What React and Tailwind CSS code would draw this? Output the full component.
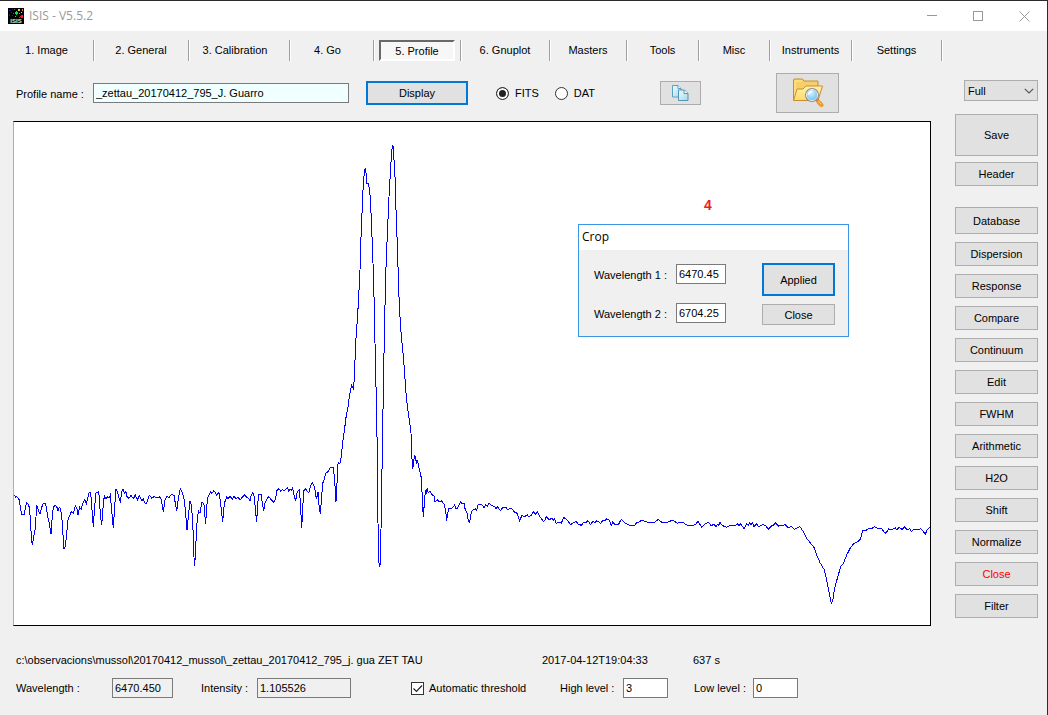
import React from "react";

// Spectrum samples. Each run lists x,y pairs relative to its own origin.
const RUNS = [
  {
    x: 0,
    y: 1410,
    points:
      "40,75 44,76 47,82 51,80 54,85 57,88 60,105 63,122 66,134 73,134 76,112 80,98 84,102 88,112 91,145 94,200 97,226 100,206 105,180 108,140 110,105 114,118 120,133 124,115 130,100 137,102 141,125 145,150 148,160 153,192 156,150 160,112 166,106 171,112 174,122 178,112 181,116 185,135 188,180 192,237 196,230 200,190 204,150 209,137 214,125 220,130 226,107 231,118 234,135 239,112 244,118 248,100 254,88 259,100 264,82 268,66 272,68 276,120 280,170 284,110 288,68 295,66 298,80 301,135 305,166 309,115 313,76 318,86 323,80 327,84 331,75 335,120 340,175 344,110 348,57 353,66 357,85 361,95 365,66 369,58 373,70 378,65 381,80 387,85 393,76 400,86 406,75 412,90 418,78 425,92 430,87 435,100 440,100 444,88 448,76 455,84 462,80 470,84 478,80 484,88 490,127 495,90 500,80 508,82 514,73 522,76 526,100 530,124 535,85 541,55 548,70 553,90 557,130 561,181 565,140 570,92 575,110 579,180 583,289 586,260 590,170 595,122 600,130 606,95 612,105 617,163 620,110 624,80 632,66 636,70 642,62 650,75 657,68 662,100 668,157 673,100 680,82 684,86 690,80 697,87 702,80 708,86 714,82 720,88",
  },
  {
    x: 690,
    y: 1320,
    points:
      "32,178 36,172 44,164 50,172 56,175 60,182 64,165 68,157 73,170 76,205 80,247 83,190 87,162 93,163 97,190 101,214 105,190 109,180 116,170 123,178 130,187 137,178 140,152 146,146 152,153 157,149 162,153 172,143 176,153 180,148 184,151 188,144 193,170 197,181 202,155 208,150 211,185 215,265 218,210 221,152 227,146 232,155 237,157 241,140 247,128 252,138 256,155 259,178 264,157 267,195 271,223 275,170 278,130 284,115 287,99 292,98 300,84 310,83 314,120 318,185 321,130 324,72",
  },
  {
    x: 960,
    y: 390,
    points:
      "56,998 60,1000 62,995 65,965 69,930 74,895 79,855 83,838 88,800 91,785 95,762 97,772 101,778 104,715 107,640 110,595 113,555 116,500 120,420 122,345 125,275 129,180 131,155 133,125 136,115 139,135 141,160 145,160 149,180 152,225 155,290 159,400 162,500 165,640 168,770 171,920 173,1010",
  },
  {
    x: 690,
    y: 1320,
    points: "442,130 444,250 446,360 448,380 450,375 453,270 455,120 457,60",
  },
  {
    x: 960,
    y: 390,
    points:
      "187,960 188,900 191,720 194,570 197,440 200,360 203,290 207,200 211,130 214,80 217,47 220,48 222,90 225,140 228,240 231,320 234,410 237,500 240,560 244,620 250,680 254,730 257,780 262,830 268,870 273,910 275,960 277,1015 280,1010 283,976 287,980 289,1002 293,992 297,1015 301,1028 304,1045",
  },
  {
    x: 690,
    y: 1320,
    points:
      "575,130 577,180 580,230 583,190 586,152 589,158 592,143 594,157 600,154 604,162 612,168 614,185 622,180 628,186 634,182 642,192 647,210 650,242 654,215 657,204 666,204 674,195 677,204 682,204 691,186 697,192 702,190 706,210 712,220 715,245 719,248 724,215 730,210 736,206 740,210 744,195 750,192",
  },
  {
    x: 1410,
    y: 1470,
    points:
      "30,42 38,46 42,54 47,44 52,48 57,40 64,46 74,50 78,56 82,50 92,62 97,54 108,52 112,60 118,56 126,56 133,66 140,68 149,92 156,76 164,80 172,74 176,80 184,76 190,66 197,72 202,66 210,80 220,94 224,92 228,80 238,90 246,84 250,92 254,86 258,100 268,96 274,100 281,82 292,90 302,104 310,98 318,94 324,102 334,106 340,98 348,98 354,92 362,104 368,94 374,98 380,92 392,100 398,92 404,92 410,86 418,90 424,106 428,96 434,102 446,102 454,88 464,98 474,104 484,108 494,106 500,98 508,96 514,90 524,94 536,98 552,98 565,88 574,96 590,98 604,92 610,92 622,100 630,96 640,98 655,108 668,106 676,104 684,94 696,112 704,102 714,98 718,100",
  },
  {
    x: 2100,
    y: 1500,
    points:
      "34,78 42,72 48,80 54,72 57,76 60,66 66,76 80,82 92,76 104,77 112,72 117,76 122,72 132,86 140,72 146,76 149,68 153,74 157,68 162,80 170,72 176,80 188,74 196,76 206,88 214,78 220,76 226,68 236,78 246,76 256,74 264,82 274,80 284,88 292,84 300,80 310,95 320,115 332,130 342,142 350,165 360,188 372,208 380,240 388,280 394,310 398,302 404,265 412,235 422,200 430,190 440,165 452,142 462,130 474,124 482,116 488,92 500,90 510,84 518,84 524,80 532,84 544,84 552,96 558,100 566,86 574,90 586,84 591,90 596,82 606,88 614,80 622,90 630,86 634,94 642,88 652,90 662,86 670,95 676,102 682,88 690,82",
  },
];

const SPECTRUM = RUNS.flatMap((run) =>
  run.points.split(" ").map((pair) => {
    const [px, py] = pair.split(",").map(Number);
    return `${px + run.x},${py + run.y}`;
  })
).join(" ");

const TABS = [
  { label: "1. Image", size: "w-[94px]" },
  { label: "2. General", size: "w-[95px]" },
  { label: "3. Calibration", size: "w-[101px] pr-2" },
  { label: "4. Go", size: "w-[84px] pr-2" },
  { label: "5. Profile", size: "w-[87px]", active: true },
  { label: "6. Gnuplot", size: "w-[89px]" },
  { label: "Masters", size: "w-[77px]" },
  { label: "Tools", size: "w-[72px]" },
  { label: "Misc", size: "w-[71px]" },
  { label: "Instruments", size: "w-[82px]" },
  { label: "Settings", size: "w-[90px]" },
];

const ACTIONS = [
  "Dispersion",
  "Response",
  "Compare",
  "Continuum",
  "Edit",
  "FWHM",
  "Arithmetic",
  "H2O",
  "Shift",
  "Normalize",
  "Close",
  "Filter",
];

const FIELD = "border border-[#7a7a7a] px-0.5 outline-none";

function Button({ className = "h-6", primary = false, children, ...rest }) {
  const frame = primary ? "border-2 border-[#0078d7]" : "border border-[#adadad]";
  return (
    <button
      type="button"
      className={`flex shrink-0 items-center justify-center bg-[#e1e1e1] ${frame} ${className}`}
      {...rest}
    >
      {children}
    </button>
  );
}

function AppIcon() {
  return (
    <svg viewBox="0 0 16 16" className="h-4 w-4" aria-hidden="true">
      <rect width="16" height="16" fill="#000" />
      <g shapeRendering="crispEdges">
        <path fill="#1a1ac8" d="M1 2h2v1H1zM4 1h1v1H4zM1 6h1v2H1zM4 7h1v1H4zM3 4h1v1H3z" />
        <path fill="#1678c8" d="M6 1h1v1H6zM5 5h1v1H5z" />
        <path fill="#10e050" d="M8 3h1v1h1v2H9v1H8V6H7V4h1zM7 8h1v1H7z" />
        <path fill="#e0e030" d="M10 1h2v2h-2zM13 4h1v1h-1z" />
        <path fill="#f08020" d="M14 1h1v2h-1zM11 5h1v1h-1z" />
        <path fill="#f02020" d="M13 7h2v3h-2v-1h-1V8h1zM11 9h1v1h-1z" />
      </g>
      <text x="8" y="15" textAnchor="middle" fontSize="6" fontWeight="700" fontFamily="Liberation Sans, sans-serif" fill="#f4efb0">
        ISIS
      </text>
    </svg>
  );
}

function CopyIcon() {
  return (
    <svg viewBox="0 0 17 17" className="h-[17px] w-[17px]" aria-hidden="true">
      <defs>
        <linearGradient id="page" x1="0" y1="0" x2="1" y2="1">
          <stop offset="0" stopColor="#f4fbff" />
          <stop offset="1" stopColor="#a5d6ea" />
        </linearGradient>
      </defs>
      <path d="M.5.5h5.500l3 3v8.500H.5z" fill="url(#page)" stroke="#5ba2c0" />
      <path d="M6 .5v3h3" fill="#fff" stroke="#5ba2c0" />
      <path d="M6.500 5h6l3.500 3.500v7H6.500z" fill="url(#page)" stroke="#4f97b6" />
      <path d="M12 5v3.500h4" fill="#fff" stroke="#4f97b6" />
    </svg>
  );
}

function FolderSearchIcon() {
  return (
    <svg viewBox="0 0 32 30" className="h-[30px] w-8" aria-hidden="true">
      <defs>
        <linearGradient id="folder" x1="0" y1="0" x2="0" y2="1">
          <stop offset="0" stopColor="#fff2b0" />
          <stop offset="1" stopColor="#ffd964" />
        </linearGradient>
        <radialGradient id="lens" cx=".4" cy=".3" r=".8">
          <stop offset="0" stopColor="#d8f3ff" />
          <stop offset="1" stopColor="#5cbcf0" />
        </radialGradient>
      </defs>
      <path d="M1.500 22.500V2q0-1 1-1h8l1.500 2h14v5.500" fill="#f8cf67" stroke="#c98d36" strokeLinejoin="round" />
      <path d="M3 21V3h7" fill="none" stroke="#ffeaa0" />
      <path d="M1.500 22.500 5 11h6l3-3h16.500L26 22.500z" fill="url(#folder)" stroke="#c98d36" strokeLinejoin="round" />
      <path d="m25 22 4 4.500" stroke="#7c7c86" strokeWidth="3" />
      <path d="m26.500 24 3 3" stroke="#f0982a" strokeWidth="4" strokeLinecap="round" />
      <path d="m26.500 23.500 2.500 2.500" stroke="#ffd27a" strokeWidth="1" strokeLinecap="round" />
      <circle cx="20" cy="17" r="6" fill="url(#lens)" stroke="#858b96" strokeWidth="2" />
      <circle cx="20" cy="17" r="5.500" fill="none" stroke="#edf5fa" strokeWidth="1" />
      <path d="M16.500 16.500a3.500 3.500 0 0 1 4-3" fill="none" stroke="#fff" strokeWidth="1.500" />
    </svg>
  );
}

function TitleBar() {
  return (
    <header className="flex h-[30px] items-center bg-white pl-2">
      <AppIcon />
      <h1 className="ml-[5px] flex-1 font-[Open_Sans,sans-serif] text-[12px] text-[#999]">ISIS - V5.5.2</h1>
      <div className="flex items-center gap-9 pr-[17px]">
        <button type="button" aria-label="Minimize">
          <svg viewBox="0 0 10 10" className="h-2.5 w-2.5" shapeRendering="crispEdges">
            <path d="M0 4.500h10" stroke="#999" />
          </svg>
        </button>
        <button type="button" aria-label="Maximize">
          <svg viewBox="0 0 10 10" className="h-2.5 w-2.5" shapeRendering="crispEdges">
            <path d="M.5.5h9v9h-9z" fill="none" stroke="#999" />
          </svg>
        </button>
        <button type="button" aria-label="Close window">
          <svg viewBox="0 0 11 11" className="h-[11px] w-[11px]">
            <path d="m.5.5 10 10M10.500.5l-10 10" stroke="#999" />
          </svg>
        </button>
      </div>
    </header>
  );
}

function TabBar() {
  return (
    <nav className="mt-[9px] flex h-[21px]">
      {TABS.map((tab) => (
        <div key={tab.label} className={`flex shrink-0 border-r border-[#a0a0a0] shadow-[1px_0_0_#fff] ${tab.size}`}>
          {tab.active ? (
            <button
              type="button"
              aria-current="page"
              className="mr-[5px] ml-[5px] flex-1 border-2 border-t-[#696969] border-r-white border-b-white border-l-[#696969] bg-[#f7f7f7]"
            >
              {tab.label}
            </button>
          ) : (
            <button type="button" className="flex-1 pb-px">
              {tab.label}
            </button>
          )}
        </div>
      ))}
    </nav>
  );
}

function FormatRadio({ label, defaultChecked }) {
  return (
    <label className="flex items-center gap-1.5">
      <input
        type="radio"
        name="format"
        defaultChecked={defaultChecked}
        className="h-[13px] w-[13px] appearance-none rounded-full border border-[#333] bg-white checked:shadow-[inset_0_0_0_2px_#fff] checked:bg-[#222]"
      />
      {label}
    </label>
  );
}

function Toolbar() {
  return (
    <div className="flex h-10 items-center pl-[3px]">
      <label htmlFor="profile" className="w-[77px] pt-0.5">
        Profile name :
      </label>
      <input id="profile" defaultValue="_zettau_20170412_795_J. Guarro" className={`h-5 w-64 bg-[#f0ffff] ${FIELD}`} />
      <Button primary className="ml-[17px] h-6 w-[102px]">
        Display
      </Button>
      <div className="ml-7 flex w-[164px] gap-4">
        <FormatRadio label="FITS" defaultChecked />
        <FormatRadio label="DAT" />
      </div>
      <Button className="h-6 w-[41px]" aria-label="Copy">
        <CopyIcon />
      </Button>
      <Button className="ml-[75px] h-10 w-[63px]" aria-label="Browse files">
        <FolderSearchIcon />
      </Button>
    </div>
  );
}

function CropDialog() {
  return (
    <section
      role="dialog"
      aria-labelledby="crop-title"
      className="absolute top-[102px] left-[564px] w-[271px] border border-[#3c96e6] bg-[#f0f0f0]"
    >
      <h2 id="crop-title" className="h-[25px] bg-white pl-[3px] font-[Open_Sans,sans-serif] text-[12px] leading-6">
        Crop
      </h2>
      <div className="flex justify-between pt-[13px] pr-[13px] pb-[11px] pl-[15px]">
        <div className="flex flex-col gap-[19px] pt-px">
          <div className="flex items-center">
            <label htmlFor="w1" className="w-[82px] pt-px">Wavelength 1 :</label>
            <input id="w1" defaultValue="6470.45" className={`h-5 w-[50px] bg-white ${FIELD}`} />
          </div>
          <div className="flex items-center">
            <label htmlFor="w2" className="w-[82px] pt-px">Wavelength 2 :</label>
            <input id="w2" defaultValue="6704.25" className={`h-5 w-[50px] bg-white ${FIELD}`} />
          </div>
        </div>
        <div className="flex flex-col gap-2">
          <Button primary className="h-[33px] w-[73px]">Applied</Button>
          <Button className="h-[21px] w-[73px]">Close</Button>
        </div>
      </div>
    </section>
  );
}

function SpectrumChart() {
  return (
    <div className="relative mt-2 flex flex-1 flex-col border border-black border-l-[#f0a81e] bg-white">
      <svg
        viewBox="42 366 2748 1509"
        preserveAspectRatio="none"
        className="min-h-0 w-full flex-1"
        role="img"
        aria-label="Spectrum profile"
      >
        <polyline
          points={SPECTRUM}
          fill="none"
          stroke="#0000ff"
          strokeWidth="1"
          vectorEffect="non-scaling-stroke"
          shapeRendering="crispEdges"
        />
      </svg>
      <span className="absolute top-[74px] left-[690px] text-[14px] leading-[18px] font-bold text-[#ed1c24]">
        4
      </span>
      <CropDialog />
    </div>
  );
}

function StatusBar() {
  return (
    <footer className="flex h-[89px] flex-col gap-2.5 pt-[26px] pl-[3px]">
      <div className="flex h-4 items-center whitespace-nowrap">
        <span className="w-[526px]">c:\observacions\mussol\20170412_mussol\_zettau_20170412_795_j. gua ZET TAU</span>
        <span className="w-[151px]">2017-04-12T19:04:33</span>
        <span>637 s</span>
      </div>
      <div className="flex h-5 items-center whitespace-nowrap">
        <label htmlFor="wavelength" className="w-24">Wavelength :</label>
        <input id="wavelength" readOnly defaultValue="6470.450" className={`h-5 w-[61px] bg-[#f0f0f0] ${FIELD}`} />
        <label htmlFor="intensity" className="ml-7 w-14">Intensity :</label>
        <input id="intensity" readOnly defaultValue="1.105526" className={`h-5 w-[94px] bg-[#f0f0f0] ${FIELD}`} />
        <label className="ml-[60px] flex w-[149px] items-center gap-[5px]">
          <span className="relative flex">
            <input type="checkbox" defaultChecked className="peer h-[13px] w-[13px] appearance-none border border-[#333] bg-white" />
            <svg viewBox="0 0 13 13" className="pointer-events-none absolute inset-0 hidden peer-checked:block" aria-hidden="true">
              <path d="m2.500 6.500 3 3 5.500-6" fill="none" stroke="#222" strokeWidth="1.200" />
            </svg>
          </span>
          Automatic threshold
        </label>
        <label htmlFor="high" className="w-[63px]">High level :</label>
        <input id="high" defaultValue="3" className={`h-5 w-[45px] bg-white ${FIELD}`} />
        <label htmlFor="low" className="ml-[26px] w-[59px]">Low level :</label>
        <input id="low" defaultValue="0" className={`h-5 w-[45px] bg-white ${FIELD}`} />
      </div>
    </footer>
  );
}

function Sidebar() {
  return (
    <aside className="flex w-[83px] shrink-0 flex-col pt-[7px]">
      <div className="relative ml-[9px] flex">
        <select
          aria-label="Zoom"
          defaultValue="Full"
          className="h-[21px] w-full appearance-none border border-[#adadad] bg-[#e1e1e1] pl-[3px]"
        >
          <option>Full</option>
        </select>
        <svg viewBox="0 0 10 6" className="pointer-events-none absolute top-2 right-1 h-1.5 w-2.5" aria-hidden="true">
          <path d="m.8.8 4.200 4.200L9.200.8" fill="none" stroke="#555" strokeWidth="1.200" />
        </svg>
      </div>
      <Button className="mt-[13px] h-[42px]">Save</Button>
      <Button className="mt-1.5 h-6">Header</Button>
      <Button className="mt-[21px] h-[27px]">Database</Button>
      <div className="mt-2 flex flex-col gap-2">
        {ACTIONS.map((name) => (
          <Button key={name} className={name === "Close" ? "h-6 text-[#ff0000]" : "h-6"}>
            {name}
          </Button>
        ))}
      </div>
    </aside>
  );
}

export default function App() {
  return (
    <div className="flex min-h-screen flex-col border-t border-r border-[#2b2b2b] bg-[#f0f0f0] font-[Liberation_Sans,sans-serif] text-[11px] leading-4 text-black">
      <TitleBar />
      <TabBar />
      <div className="mt-3 flex flex-1 gap-6 pr-[9px] pl-[13px]">
        <main className="flex min-w-0 flex-1 flex-col">
          <Toolbar />
          <SpectrumChart />
          <StatusBar />
        </main>
        <Sidebar />
      </div>
    </div>
  );
}
